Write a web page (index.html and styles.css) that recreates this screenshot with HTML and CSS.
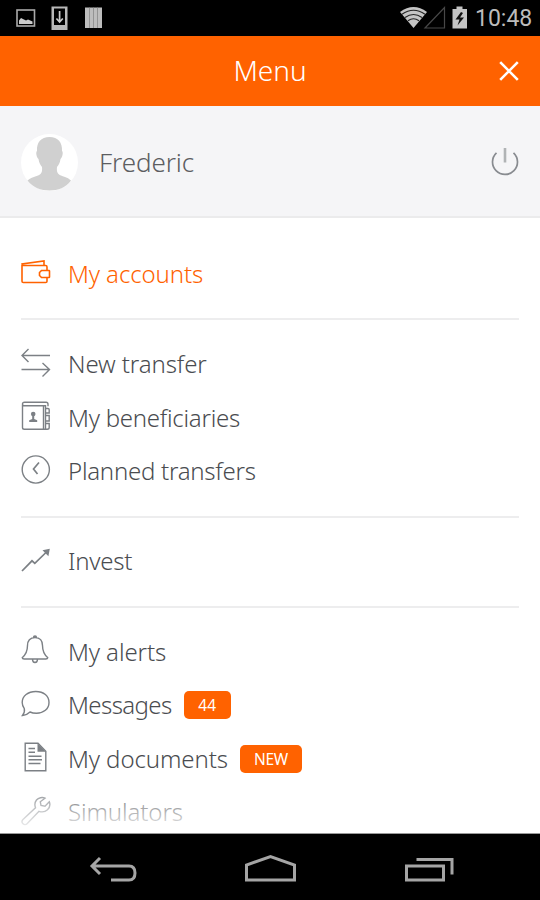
FILE: index.html
```
<!DOCTYPE html>
<html lang="en">
<head>
  <meta charset="UTF-8">
  <title>Menu</title>
  <link rel="stylesheet" href="styles.css">
</head>
<body>
  <div class="statusbar">
    <svg class="status-left" width="110" height="36" viewBox="0 0 110 36">
      <rect x="17" y="10" width="17.5" height="16" fill="none" stroke="#aaa" stroke-width="1.6"/>
      <path d="M19 24v-3.500l2-2.500 3 1.500 2 1 2-1 4.500 2v2.500z" fill="#ccc"/>
      <path d="M51.500 6.500h16v23.500h-16z" fill="#b8b8b8"/>
      <path d="M54 8.500h11v16.500H54z" fill="#000"/>
      <path d="M59.600 11v10M56.400 18.500l3.200 3.500 3.200-3.500" fill="none" stroke="#ccc" stroke-width="1.700"/>
      <path d="M85 7.500h17v20.500H85z" fill="#bdbdbd"/>
      <path d="M89.500 7.500v20.500M93.500 7.500v20.500M97.500 7.500v20.500" stroke="#888" stroke-width=".8"/>
    </svg>
    <svg class="status-right" width="74" height="36" viewBox="0 0 74 36">
      <path d="M1 12Q14.500 2 28 12L14.500 28z" fill="#c4c4c4"/>
      <path d="M3 14.300q11.500-8 23 0M6 17.500q8.500-6 17 0M9 20.800q5.500-4 11 0" fill="none" stroke="#222" stroke-width="1.100"/>
      <path d="M26 28L45.500 7.500V28z" fill="none" stroke="#484848" stroke-width="1.200"/>
      <path d="M53.500 9h4V6.500h6V9h4.500v19.500H53.500z" fill="#c4c4c4"/>
      <path d="M62 12l-5.500 7.500h4L58.500 25.500l6.500-8h-4l3-4.500z" fill="#111"/>
    </svg>
    <span class="clock">10:48</span>
  </div>

  <div class="header">
    <h1 class="title">Menu</h1>
    <svg class="close" width="20" height="20" viewBox="0 0 20 20">
      <path d="M1.200 1.200l17.600 17.600M18.800 1.200L1.200 18.800"/>
    </svg>
  </div>

  <div class="profile">
    <svg class="avatar" width="57" height="57" viewBox="0 0 57 57">
      <circle cx="28.500" cy="28.500" r="28.500" fill="#fff"/>
      <path d="M28.500 3C20 3 15.500 8.500 16 17c-1.500 1-.5 6.500 1.500 8 .5 4 2 6 3.500 8 .5 5-.5 7-4 8.500-5 2-8 2.500-10.500 5C12 53.500 20 56.500 28.500 56.500S45 53.500 50 46.500c-2.500-2.500-5-3-10-5-3.500-1.500-4.500-3.500-4-8.500 1.500-2 3-4 3.500-8 2-1.500 3-7 1.500-8C41.500 8.500 37 3 28.500 3z" fill="#d0d0d0"/>
    </svg>
    <span class="name">Frederic</span>
    <svg class="power" width="28" height="30" viewBox="0 0 28 30">
      <path d="M5.500 5.800a12.500 12.500 0 1 0 17 0" stroke="#888b90" stroke-width="1.700"/>
      <path d="M14 1v14.500" stroke="#b0b3b5" stroke-width="2.600"/>
    </svg>
  </div>

  <div class="menu">
    <div class="group">
      <a class="item active">
        <svg class="icon" viewBox="0 0 32 32">
          <path d="M2 9v16.200q0 1.300 1.300 1.300h22.400q1.300 0 1.300-1.300V11q0-1.500-1.300-1.500H3.500Q2 9.500 2 8L24 5v4.500" />
          <path d="M29 14.500h-7.500l-2 2v3l2 2H29q.5 0 .5-.6v-5.800q0-.6-.5-.6z" fill="#fff"/>
        </svg>
        <span class="label">My accounts</span>
      </a>
    </div>
    <div class="group">
      <a class="item">
        <svg class="icon" viewBox="0 0 32 32">
          <path d="M30 8.500H2M8.500 2L2 8.500 8.500 15M1.500 22.500H29.500M22.500 16L29.500 22.500 22.500 29.500"/>
        </svg>
        <span class="label">New transfer</span>
      </a>
      <a class="item">
        <svg class="icon" viewBox="0 0 32 32">
          <path d="M2.500 4.500v23q0 1.800 1.800 1.800h21.200V5.800H4Q2.500 5.800 2.500 4T4.500 2.200H26q2 0 2 2v2"/>
          <path d="M23.500 6v23M25.500 8.500h2.500q1.200 0 1.200 1.200v3.300h-3.700M25.500 15.500h3.700v5.500h-3.700M25.500 23.500h3.700v4q0 1.800-2 1.800h-2"/>
          <circle class="solid" cx="13.200" cy="14" r="2.300"/>
          <path class="solid" d="M12.200 15h2v4l3 1.200V22H9.200v-1.800l3-1.200z"/>
        </svg>
        <span class="label tight">My beneficiaries</span>
      </a>
      <a class="item">
        <svg class="icon" viewBox="0 0 32 32">
          <circle cx="15.800" cy="15.500" r="13.600"/>
          <path d="M19 8.500l-5.500 6.500 4 5" stroke-width="1.700"/>
        </svg>
        <span class="label tight">Planned transfers</span>
      </a>
    </div>
    <div class="group">
      <a class="item">
        <svg class="icon" viewBox="0 0 32 32">
          <path d="M2 27l10-10.200 2.800 2.600L27 7.500" stroke-width="1.700"/>
          <path class="solid" d="M29.800 4.800l-7.300 1.400 5.900 6z"/>
        </svg>
        <span class="label tight">Invest</span>
      </a>
    </div>
    <div class="group">
      <a class="item">
        <svg class="icon" viewBox="0 0 32 32">
          <path d="M15 3.500c-5 0-7.500 3.500-7.500 8 0 6-1.500 9-5.300 12.200q.2 1.300 2 1.300h21.600q1.800 0 2-1.300C24 20.500 22.500 17.500 22.500 11.500c0-4.500-2.500-8-7.500-8zM13.500 3.500q0-1.500 1.500-1.500t1.500 1.500M12.500 25q0 3.500 2.500 3.500t2.500-3.500"/>
        </svg>
        <span class="label">My alerts</span>
      </a>
      <a class="item">
        <svg class="icon" viewBox="0 0 32 32">
          <path d="M15.800 3.500c8 0 13.200 4.500 13.200 11s-5.500 10.800-12.500 10.800c-2.500 0-4.500-.3-6.500-1.300-2 2-4 3.200-7.500 3.500 1.500-2 2.500-4 1.800-6.800C2.800 18.500 2.200 17 2.200 14.500 2.200 8 8 3.500 15.800 3.500z"/>
        </svg>
        <span class="label messages">Messages</span>
        <span class="badge count">44</span>
      </a>
      <a class="item">
        <svg class="icon" viewBox="0 0 32 32">
          <path d="M5.200 2.200H18l7.800 8v19.600H5.200z"/>
          <path class="solid" d="M17.500 2.200v8.500h8.300z"/>
          <path d="M8.500 7.500h6.500M8.500 11.300h6.500M8.500 15.200h13M8.500 18.800h13.500M8.500 22.500h12"/>
        </svg>
        <span class="label">My documents</span>
        <span class="badge new">NEW</span>
      </a>
      <a class="item">
        <svg class="icon" viewBox="0 0 32 32">
          <path d="M25 3.200C22.500 2 18.500 2.500 16.500 5c-2 2.500-2 5-1 7.800L3 24.500c-1.500 1.600-1 3.300 0 4.300s3 1.200 4.300-.3L19 16.300c3 1 6 .7 8.500-1.500 2-2 2.800-5.500 1.800-8L25 11.200l-4-.7-.7-3.700z"/>
        </svg>
        <span class="label">Simulators</span>
      </a>
    </div>
    <div class="fade"></div>
  </div>

  <div class="navbar">
    <svg width="540" height="66" viewBox="0 0 540 66">
      <path d="M100 24l-8 8 8 8M92 32h37q6 0 6 7t-6 7H111"/>
      <path d="M246.500 46V31L270.500 22.500 294.500 31V46z"/>
      <path d="M406.500 32H443.500V46H406.500zM416.500 25.500H452V40.500"/>
    </svg>
  </div>
</body>
</html>
```

FILE: styles.css
```
* {
  box-sizing: border-box;
}
body {
  margin: 0;
  width: 540px;
  height: 900px;
  display: flex;
  flex-direction: column;
  overflow: hidden;
  background: #fff;
  font-family: "Noto Sans", "Open Sans", sans-serif;
  font-weight: 300;
}
svg {
  display: block;
  flex: none;
}

/* android status bar */
.statusbar {
  height: 36px;
  flex: none;
  display: flex;
  align-items: center;
  background: #000;
}
.status-right {
  margin-left: auto;
}
.clock {
  width: 67px;
  padding-left: 2px;
  padding-top: 1px;
  font-family: Roboto, sans-serif;
  font-weight: 400;
  font-size: 23px;
  color: #bcbcbc;
}

.header {
  height: 70px;
  flex: none;
  display: grid;
  grid-template-columns: 1fr auto 1fr;
  align-items: center;
  padding-right: 21px;
  padding-left: 21px;
  background: #ff6200;
}
.title {
  grid-column: 2;
  margin: 0;
  padding-bottom: 3px;
  font-size: 28px;
  font-weight: 350;
  color: #fff;
}
.close {
  justify-self: end;
  fill: none;
  stroke: #fff;
  stroke-width: 2.6;
}

.profile {
  height: 112px;
  flex: none;
  display: flex;
  align-items: center;
  padding: 2px 21px 0;
  background: #f5f5f7;
  border-bottom: 2px solid #ebebec;
}
.name {
  margin-left: 21px;
  font-size: 26px;
  letter-spacing: -0.1px;
  color: #5c5d61;
}
.power {
  margin-left: auto;
  fill: none;
}

.menu {
  position: relative;
  height: 616px;
  flex: none;
  padding: 12px 21px 0;
  overflow: hidden;
  border-bottom: 1px solid #999;
}
.group {
  padding: 15.5px 0 19.25px;
  border-bottom: 2px solid #ededee;
}
.item {
  display: flex;
  align-items: center;
  height: 53.5px;
  color: #4a4c50;
}
.active {
  color: #ff6200;
}
.icon {
  width: 32px;
  height: 32px;
  margin-left: -1px;
  fill: none;
  stroke: #7c8085;
  stroke-width: 1.4;
}
.icon .solid {
  fill: #7c8085;
  stroke: none;
}
.active .icon {
  stroke: #ff6200;
  stroke-width: 1.6;
}
.label {
  margin-left: 16px;
  padding-top: 3px;
  font-size: 24px;
  line-height: 32px;
  letter-spacing: -0.1px;
  white-space: nowrap;
}
.tight {
  letter-spacing: -0.25px;
}
.messages {
  letter-spacing: -0.6px;
}
.badge {
  height: 28px;
  margin-left: 12px;
  margin-top: 3px;
  border-radius: 5px;
  background: #ff6200;
  color: #fff;
  font-size: 15.5px;
  font-weight: 400;
  line-height: 28px;
  text-align: center;
}
.count {
  width: 47px;
}
.new {
  width: 62px;
  letter-spacing: -0.3px;
}

/* list fades out above the navigation bar */
.fade {
  position: absolute;
  left: 0;
  right: 0;
  bottom: 0;
  height: 54px;
  background: linear-gradient(rgba(255,255,255,0), rgba(255,255,255,0.95));
}

.navbar {
  height: 66px;
  flex: none;
  background: #000;
}
.navbar svg {
  fill: none;
  stroke: #a5a5a5;
  stroke-width: 3;
}
```
